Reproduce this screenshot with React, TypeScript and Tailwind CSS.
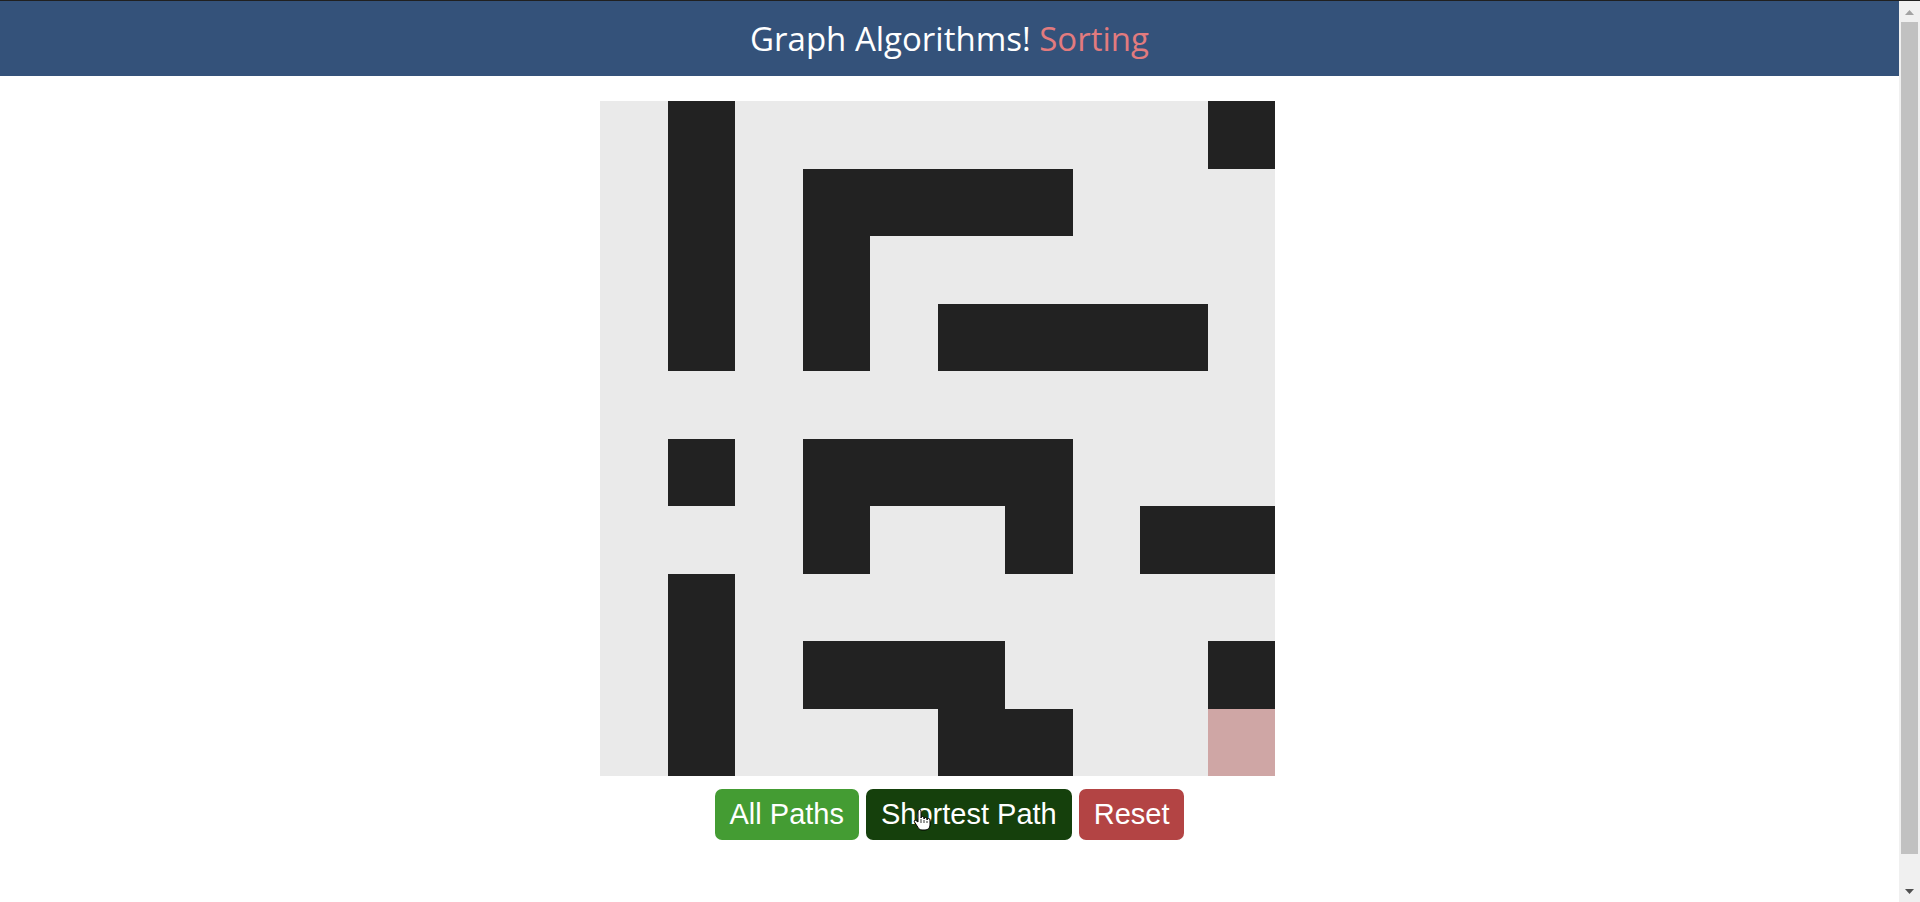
const maze = [
  ".#.......#",
  ".#.####...",
  ".#.#......",
  ".#.#.####.",
  "..........",
  ".#.####...",
  "...#..#.##",
  ".#........",
  ".#.###...#",
  ".#...##..e",
];

function Cell({ kind }: { kind: string }) {
  if (kind === "#") return <div className="bg-[#222222]" />;
  if (kind === "e") return <div className="bg-[#cfa6a5]" />;
  return <div className="bg-[#eaeaea]" />;
}

function Header() {
  return (
    <header className="h-[75px] bg-[#34527a] flex items-center justify-center">
      <h1 className="font-['Open_Sans',sans-serif] text-[33px] leading-none text-white">
        Graph Algorithms! <span className="text-[#e27b7e]">Sorting</span>
      </h1>
    </header>
  );
}

function HandCursor() {
  return (
    <svg
      className="absolute left-[47px] top-[20px]"
      width="18"
      height="22"
      viewBox="0 0 18 22"
    >
      <path
        d="M5 2a1.5 1.5 0 0 1 3 0V9a1.5 1.5 0 0 1 3 0v1a1.5 1.5 0 0 1 3 0v1a1.5 1.5 0 0 1 3 0V16c0 3-2 5-5 5H9c-2 0-3-1-4-2.5L1.5 13c-.8-1 .2-2.3 1.3-1.6L5 13Z"
        fill="#fff"
        stroke="#000"
        strokeWidth="1"
      />
      <path d="M8 10v4M11 11v3M14 12v2" stroke="#000" strokeWidth="0.8" />
    </svg>
  );
}

function Scrollbar() {
  return (
    <aside className="flex w-[21px] flex-col items-center bg-[#f0f0f0] pt-[9px] pb-[8px]">
      <svg width="9" height="5" viewBox="0 0 9 5">
        <polygon points="4.5,0 9,5 0,5" fill="#a3a3a3" />
      </svg>
      <div className="mt-[7px] h-[832px] w-[17px] bg-[#c1c1c1]" />
      <div className="flex-1" />
      <svg width="9" height="5" viewBox="0 0 9 5">
        <polygon points="0,0 9,0 4.5,5" fill="#505050" />
      </svg>
    </aside>
  );
}

export default function App() {
  return (
    <div className="flex h-[902px] flex-col overflow-hidden bg-white">
      <div className="h-px bg-[#202020]" />
      <div className="flex flex-1">
        <div className="flex-1">
          <Header />
          <main className="flex flex-col items-center">
            {/* Maze board */}
            <div className="mt-[25px] mr-[24px] grid h-[675px] w-[675px] grid-cols-10 grid-rows-10">
              {maze.map((row, r) =>
                row.split("").map((c, i) => <Cell key={`${r}-${i}`} kind={c} />)
              )}
            </div>

            {/* Controls */}
            <div className="mt-[13px] flex gap-[7px] font-['Liberation_Sans',Arial,sans-serif] text-[29px] leading-none text-white">
              <button className="h-[51px] rounded-[7px] bg-[#449c33] px-[15px]">All Paths</button>
              <button className="relative h-[51px] rounded-[7px] bg-[#15400c] px-[15px]">
                Shortest Path
                <HandCursor />
              </button>
              <button className="h-[51px] rounded-[7px] bg-[#b34444] px-[15px]">Reset</button>
            </div>
          </main>
        </div>
        <Scrollbar />
      </div>
    </div>
  );
}
